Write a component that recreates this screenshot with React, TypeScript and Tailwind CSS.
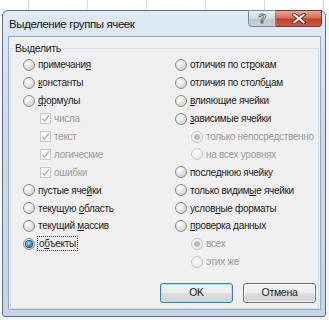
import React from "react";

type Opt = {
  kind: "radio" | "check";
  label: React.ReactNode;
  sub?: boolean;
  disabled?: boolean;
  on?: boolean;
  focus?: boolean;
};

const left: Opt[] = [
  { kind: "radio", label: <>примечани<u>я</u></> },
  { kind: "radio", label: <><u>к</u>онстанты</> },
  { kind: "radio", label: <><u>ф</u>ормулы</> },
  { kind: "check", sub: true, disabled: true, on: true, label: "числа" },
  { kind: "check", sub: true, disabled: true, on: true, label: "текст" },
  { kind: "check", sub: true, disabled: true, on: true, label: "логические" },
  { kind: "check", sub: true, disabled: true, on: true, label: "ошибки" },
  { kind: "radio", label: <>пустые яче<u>й</u>ки</> },
  { kind: "radio", label: <>текущую <u>о</u>бласть</> },
  { kind: "radio", label: <>текущий <u>м</u>ассив</> },
  { kind: "radio", on: true, focus: true, label: <>о<u>б</u>ъекты</> },
];

const right: Opt[] = [
  { kind: "radio", label: <>отличия по ст<u>р</u>окам</> },
  { kind: "radio", label: <>отличия по столб<u>ц</u>ам</> },
  { kind: "radio", label: <><u>в</u>лияющие ячейки</> },
  { kind: "radio", label: <><u>з</u>ависимые ячейки</> },
  { kind: "radio", sub: true, disabled: true, on: true, label: "только непосредственно" },
  { kind: "radio", sub: true, disabled: true, label: "на всех уровнях" },
  { kind: "radio", label: <>после<u>д</u>нюю ячейку</> },
  { kind: "radio", label: <>только видим<u>ы</u>е ячейки</> },
  { kind: "radio", label: <>услов<u>н</u>ые форматы</> },
  { kind: "radio", label: <><u>п</u>роверка данных</> },
  { kind: "radio", sub: true, disabled: true, on: true, label: "всех" },
  { kind: "radio", sub: true, disabled: true, label: "этих же" },
];

function Radio({ on, disabled }: { on?: boolean; disabled?: boolean }) {
  return (
    <span
      className={`flex h-[12px] w-[12px] shrink-0 items-center justify-center rounded-full border ${
        disabled
          ? "border-[#c6c6c6] bg-[radial-gradient(circle_at_35%_30%,#ffffff_0%,#f1f1f1_50%,#e2e2e2_100%)]"
          : "border-[#8c8c8c] bg-[radial-gradient(circle_at_35%_30%,#ffffff_0%,#e6e6e6_45%,#c2c2c2_100%)]"
      }`}
    >
      {on &&
        (disabled ? (
          <span className="h-[6px] w-[6px] rounded-full bg-[#bcbcbc]" />
        ) : (
          <span className="h-[6px] w-[6px] rounded-full bg-[radial-gradient(circle_at_40%_35%,#a6e4ff_0%,#2b8bd3_55%,#0b4d89_100%)] ring-1 ring-[#24486d]" />
        ))}
    </span>
  );
}

function Check() {
  return (
    <span className="flex h-[11px] w-[11px] shrink-0 items-center justify-center border border-[#c9c9c9] bg-[#f7f7f7]">
      <svg width="9" height="9" viewBox="0 0 9 9">
        <path d="M1.4 4.9 L3.5 7.1 L7.8 1.4" fill="none" stroke="#a8a8a8" strokeWidth="1.2" />
      </svg>
    </span>
  );
}

function Item({ o }: { o: Opt }) {
  return (
    <div
      className={`flex h-[17.9px] items-center ${
        o.sub ? (o.kind === "check" ? "pl-[17px]" : "pl-[16px]") : ""
      }`}
    >
      {o.kind === "radio" ? <Radio on={o.on} disabled={o.disabled} /> : <Check />}
      <span
        className={`whitespace-nowrap leading-[13px] ${o.disabled ? "text-[#9b9b9b]" : "text-[#1c1c1c]"} ${
          o.focus ? "ml-[2px] border border-dotted border-[#3c3c3c] px-[1px]" : "ml-[3px]"
        }`}
      >
        {o.label}
      </span>
    </div>
  );
}

export default function App() {
  return (
    <div className="flex h-[320px] w-[329px] flex-col overflow-hidden bg-[#f7f7f7] font-['Liberation_Sans',Arial,sans-serif] text-[10px] tracking-[-0.3px]">
      {/* excel grid behind the dialog */}
      <div className="flex h-[10px] shrink-0 bg-white">
        <div className="w-[29px] border-r border-[#d9d9d9]" />
        <div className="w-[59px] border-r border-[#d9d9d9]" />
        <div className="w-[59px] border-r border-[#d9d9d9]" />
        <div className="w-[59px] border-r border-[#d9d9d9]" />
        <div className="w-[59px] border-r border-[#d9d9d9]" />
        <div className="w-[59px] border-r border-[#d9d9d9]" />
      </div>

      <div className="ml-[2px] flex h-[307px] w-[324px] flex-col rounded-t-[6px] rounded-b-[3px] border border-[#5f6f82] bg-[linear-gradient(180deg,#dfeaf6_0%,#cbdbec_40%,#c3d5e9_100%)]">
        <div className="flex h-[25px] shrink-0 items-start justify-between">
          <span className="mt-[5px] pl-[6px] text-[11.5px] tracking-[-0.4px] text-[#141414]">Выделение группы ячеек</span>
          <div className="mr-[3px] -mt-[1px] flex">
            <div className="flex h-[17px] w-[28px] items-center justify-center rounded-bl-[4px] border border-[#7a8898] bg-[linear-gradient(180deg,#e8eef4_0%,#d0d9e2_50%,#bcc7d2_51%,#c8d1da_100%)]">
              <span className="text-[13px] font-bold leading-none text-white [-webkit-text-stroke:0.8px_#4e5a66]">?</span>
            </div>
            <div className="flex h-[17px] w-[46px] items-center justify-center rounded-br-[4px] border border-l-0 border-[#6f3a33] bg-[linear-gradient(180deg,#e8a493_0%,#d4715d_45%,#c2412a_55%,#d05a3f_100%)]">
              <svg width="14" height="11" viewBox="0 0 14 11">
                <path d="M2 1.5 L12 9.5 M12 1.5 L2 9.5" stroke="#5a2a24" strokeWidth="3.6" strokeLinecap="round" />
                <path d="M2 1.5 L12 9.5 M12 1.5 L2 9.5" stroke="#ffffff" strokeWidth="2" strokeLinecap="round" />
              </svg>
            </div>
          </div>
        </div>

        <div className="ml-[5px] flex h-[274px] w-[313px] flex-col border border-[#97a9bd] bg-[#f0f0f0]">
          <fieldset className="mx-[1px] mt-[5px] flex-1 border border-[#d5dfe5] px-0 pb-[3px] pt-0">
            <legend className="ml-[3px] px-[1px] text-[10.5px] leading-[13px] text-[#1c1c1c]">Выделить</legend>
            <div className="flex pl-[12px] pt-[1px]">
              <div className="flex w-[152px] flex-col">
                {left.map((o, i) => (
                  <Item key={i} o={o} />
                ))}
              </div>
              <div className="flex flex-col">
                {right.map((o, i) => (
                  <Item key={i} o={o} />
                ))}
              </div>
            </div>
            <div className="mt-[12px] flex justify-end gap-[10px] pr-[2px]">
              <button className="h-[20px] w-[73px] rounded-[3px] border border-[#3c7fb1] bg-[linear-gradient(180deg,#f3f3f3_0%,#ececec_50%,#dedede_51%,#d3d3d3_100%)] text-[10.5px] text-[#1c1c1c] shadow-[inset_0_0_0_1px_#a8e2f8]">
                OK
              </button>
              <button className="h-[20px] w-[73px] rounded-[3px] border border-[#707070] bg-[linear-gradient(180deg,#f3f3f3_0%,#ececec_50%,#dedede_51%,#d3d3d3_100%)] text-[10.5px] text-[#1c1c1c] shadow-[inset_0_0_0_1px_#fbfbfb]">
                Отмена
              </button>
            </div>
          </fieldset>
        </div>
      </div>
    </div>
  );
}
